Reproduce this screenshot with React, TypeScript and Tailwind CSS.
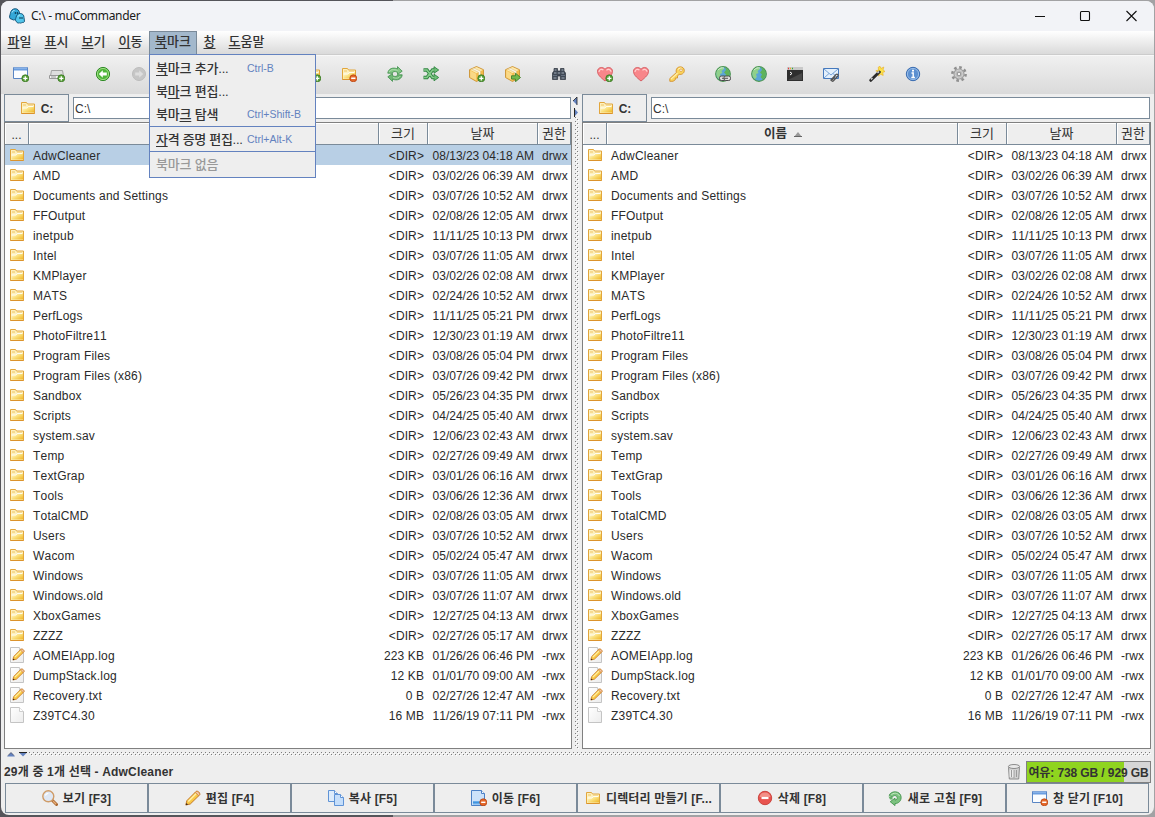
import React from 'react';

interface FileEntry {
  name: string;
  size: string;
  date: string;
  perms: string;
  kind: 'folder' | 'text' | 'file';
}

const dir = (name: string, date: string): FileEntry => ({ name, size: '<DIR>', date, perms: 'drwx', kind: 'folder' });

const files: FileEntry[] = [
  dir('AdwCleaner', '08/13/23 04:18 AM'),
  dir('AMD', '03/02/26 06:39 AM'),
  dir('Documents and Settings', '03/07/26 10:52 AM'),
  dir('FFOutput', '02/08/26 12:05 AM'),
  dir('inetpub', '11/11/25 10:13 PM'),
  dir('Intel', '03/07/26 11:05 AM'),
  dir('KMPlayer', '03/02/26 02:08 AM'),
  dir('MATS', '02/24/26 10:52 AM'),
  dir('PerfLogs', '11/11/25 05:21 PM'),
  dir('PhotoFiltre11', '12/30/23 01:19 AM'),
  dir('Program Files', '03/08/26 05:04 PM'),
  dir('Program Files (x86)', '03/07/26 09:42 PM'),
  dir('Sandbox', '05/26/23 04:35 PM'),
  dir('Scripts', '04/24/25 05:40 AM'),
  dir('system.sav', '12/06/23 02:43 AM'),
  dir('Temp', '02/27/26 09:49 AM'),
  dir('TextGrap', '03/01/26 06:16 AM'),
  dir('Tools', '03/06/26 12:36 AM'),
  dir('TotalCMD', '02/08/26 03:05 AM'),
  dir('Users', '03/07/26 10:52 AM'),
  dir('Wacom', '05/02/24 05:47 AM'),
  dir('Windows', '03/07/26 11:05 AM'),
  dir('Windows.old', '03/07/26 11:07 AM'),
  dir('XboxGames', '12/27/25 04:13 AM'),
  dir('ZZZZ', '02/27/26 05:17 AM'),
  { name: 'AOMEIApp.log', size: '223 KB', date: '01/26/26 06:46 PM', perms: '-rwx', kind: 'text' },
  { name: 'DumpStack.log', size: '12 KB', date: '01/01/70 09:00 AM', perms: '-rwx', kind: 'text' },
  { name: 'Recovery.txt', size: '0 B', date: '02/27/26 12:47 AM', perms: '-rwx', kind: 'text' },
  { name: 'Z39TC4.30', size: '16 MB', date: '11/26/19 07:11 PM', perms: '-rwx', kind: 'file' },
];

/* ---------- icons ---------- */

function Svg({ children, size = 16 }: { children: React.ReactNode; size?: number }) {
  return (
    <svg width={size} height={size} viewBox="0 0 16 16" fill="none" className="block shrink-0">
      {children}
    </svg>
  );
}

// Gradients shared by all icons
function IconDefs() {
  return (
    <svg width="0" height="0" className="absolute">
      <defs>
        <linearGradient id="folder-fill" x1="0" y1="0" x2="1" y2="1">
          <stop offset="0.1" stopColor="#fff8d6" />
          <stop offset="0.5" stopColor="#fae07c" />
          <stop offset="1" stopColor="#efb524" />
        </linearGradient>
        <linearGradient id="page-fill" x1="0" y1="0" x2="1" y2="1">
          <stop offset="0" stopColor="#fff" />
          <stop offset="1" stopColor="#ececec" />
        </linearGradient>
      </defs>
    </svg>
  );
}

function PlusBadge() {
  return (
    <g>
      <circle cx="12.3" cy="12.3" r="3.5" fill="#5aa33c" stroke="#38751f" strokeWidth="0.8" />
      <path d="M12.3 10.2v4.200M10.200 12.3h4.200" stroke="#fff" strokeWidth="1.3" />
    </g>
  );
}

function MinusBadge() {
  return (
    <g>
      <circle cx="12.3" cy="12.3" r="3.5" fill="#e5682a" stroke="#b8430f" strokeWidth="0.8" />
      <path d="M10.2 12.3h4.200" stroke="#fff" strokeWidth="1.4" />
    </g>
  );
}

function FolderShape() {
  return (
    <g>
      <path d="M1.500 13.500v-11h5l1 1.500h7v9.500z" fill="#fdf0bd" stroke="#e2a63c" />
      <path d="M3 5h3M8 6h5" stroke="#f0c566" />
      <path d="M2.500 12.500v-5h4.500l1-1.500h6v6.500z" fill="url(#folder-fill)" />
      <path d="M2.500 8h4.500l1.200-1.500h5.300" stroke="#fffdf0" />
      <path d="M1.500 13.500h13" stroke="#dc932c" />
    </g>
  );
}

const FolderIcon = () => <Svg><FolderShape /></Svg>;
const FolderAddIcon = () => <Svg><FolderShape /><PlusBadge /></Svg>;
const FolderRemoveIcon = () => <Svg><FolderShape /><MinusBadge /></Svg>;

function PencilShape() {
  return (
    <g>
      <path d="M.8 15l1-4.300L10.800 1.700c1.400-1.600 5 1.400 3.700 3.300L5.300 14z" fill="#f9c846" stroke="#c57a2a" strokeWidth="1" />
      <path d="M3.300 11.500l8-8" stroke="#fff0a8" strokeWidth="1.500" />
      <path d="M10.300 2.500l3.400 3.300 1-1.200c.5-1.800-2-3.900-3.400-3.100z" fill="#f3c3a2" stroke="#c57a2a" strokeWidth="0.7" />
      <path d="M.8 15.200l.6-2.200 1.700 1.600z" fill="#3a2a1a" />
    </g>
  );
}

const PencilIcon = () => <Svg><PencilShape /></Svg>;

function PageShape() {
  return (
    <g>
      <path d="M1.500.5h9l4 4v11h-13z" fill="url(#page-fill)" stroke="#c4c4c4" />
      <path d="M10.500.5v4h4" fill="#fff" stroke="#cfcfcf" />
    </g>
  );
}

const FileIcon = () => <Svg><PageShape /></Svg>;

const TextFileIcon = () => (
  <Svg>
    <PageShape />
    <g transform="translate(3.200 1) scale(0.800)"><PencilShape /></g>
  </Svg>
);

function WindowShape() {
  return (
    <g>
      <path d="M.5 1.500h14v11H.5z" fill="#fbfdff" stroke="#5a86c4" />
      <path d="M1 2h13v2.500H1z" fill="#6b9ee0" />
      <path d="M1 2h13" stroke="#a6c6f0" />
    </g>
  );
}

const WindowAddIcon = () => <Svg><WindowShape /><PlusBadge /></Svg>;
const WindowCloseIcon = () => <Svg><WindowShape /><MinusBadge /></Svg>;

const DriveAddIcon = () => (
  <Svg>
    <path d="M2.500 4.500h11l1 5.500h-13z" fill="#dedede" stroke="#a2a2a2" />
    <path d="M.5 9.500h14v3H.5z" fill="#f4f4f4" stroke="#989898" />
    <path d="M2 11h5" stroke="#999" />
    <PlusBadge />
  </Svg>
);

const BackIcon = () => (
  <Svg>
    <circle cx="8" cy="8" r="6.600" fill="#4fb53a" stroke="#2f8a25" />
    <circle cx="8" cy="8" r="5.600" stroke="#a8e08c" strokeWidth="0.900" />
    <path d="M3.800 8l4-3.700v2.300h4v2.800h-4v2.300z" fill="#fff" />
  </Svg>
);

const ForwardIcon = () => (
  <Svg>
    <circle cx="8" cy="8" r="6.500" fill="#c6c6c6" stroke="#bcbcbc" />
    <path d="M12.200 8l-4-3.700v2.300h-4v2.800h4v2.300z" fill="#dedede" />
  </Svg>
);

const SyncIcon = () => (
  <Svg>
    <path d="M.8 7.200C1.300 2.600 6 1 10.500 2.900V.6l4.700 4.600-4.700 3.300V6.300C7.500 5 6 5.300 5.200 7.200z" fill="#85c887" stroke="#3f8f4b" strokeWidth="0.800" />
    <path d="M15.200 8.800c-.5 4.600-5.200 6.200-9.700 4.300v2.300L.8 10.800l4.700-3.300v2.200c3 1.300 4.500 1 5.300-.9z" fill="#70b875" stroke="#3f8f4b" strokeWidth="0.800" />
    <path d="M2.200 6C3.500 3.500 7 2.800 10.500 4.500M6 11.500c3 1.300 6 .8 7.300-1.500" stroke="#b9e2b6" strokeWidth="0.800" />
  </Svg>
);

const SwapIcon = () => (
  <Svg>
    <path d="M.5 4h3.500l5.500 7.500h2M.5 11.500h3.500L9.500 4h2" stroke="#2f8540" strokeWidth="3.400" />
    <path d="M11 .7L15.700 4 11 7.300zM11 8.200l4.700 3.300L11 14.800z" fill="#6fbf78" stroke="#2f8540" strokeWidth="0.900" />
    <path d="M1 4h3l5.500 7.500h2M1 11.500h3L9.500 4h2" stroke="#86cd8c" strokeWidth="1.500" />
  </Svg>
);

function BoxShape() {
  return (
    <g>
      <path d="M7.500.5l7 3.200v7.800l-7 4-7-4V3.700z" fill="#f3bb4a" stroke="#cc9333" strokeWidth="0.900" />
      <path d="M7.500 1l6.300 2.900-6.300 3.300-6.300-3.300z" fill="#fde9ae" />
      <path d="M1.200 4.500l6 3.300v6.800l-6-3.400z" fill="#fad986" />
      <path d="M3 3l6.500 3.300v3.500l2-1V5.200L5 2.100z" fill="#fbf8ec" stroke="#d9b76e" strokeWidth="0.500" />
    </g>
  );
}

const PackIcon = () => <Svg><BoxShape /><PlusBadge /></Svg>;
const UnpackIcon = () => (
  <Svg>
    <BoxShape />
    <path d="M6.500 9.800h4V7.200l5 4.300-5 4.200v-2.600h-4z" fill="#72b84c" stroke="#3f7f2a" strokeWidth="0.900" />
  </Svg>
);

const BinocularsIcon = () => (
  <Svg>
    <path d="M3 2.500h3.500V5h3V2.500H13V5l1.500 2v6.500H9.300V10H6.700v3.500H1.500V7L3 5z" fill="#414a56" stroke="#2b323c" strokeWidth="0.700" />
    <path d="M3.500 4h2M10.500 4h2M3 7h2.500M10.500 7H13M6.800 7h2.400M2.500 12h3M10.500 12h3" stroke="#a3acb8" />
    <path d="M2 9.500h4M10 9.500h4" stroke="#667180" />
  </Svg>
);

function HeartShape() {
  return (
    <g>
      <path d="M8 15C3 11 .5 8.500.5 5.300c0-3.800 5-5.300 7.500-2 2.500-3.300 7.500-1.800 7.500 2C15.500 8.500 13 11 8 15z" fill="#f8868a" stroke="#d4575c" strokeWidth="0.900" />
      <path d="M2 6c0-2.500 2.700-3.500 4.400-1.800M9.500 4.300c1.600-1.600 4.500-.7 4.500 1.400" stroke="#ffd0d0" strokeWidth="1.200" />
    </g>
  );
}

const HeartIcon = () => <Svg><HeartShape /></Svg>;
const HeartAddIcon = () => <Svg><HeartShape /><PlusBadge /></Svg>;

const KeyIcon = () => (
  <Svg>
    <path d="M7.500 3.200C9-.3 15 .2 15.300 4.300c.2 3-2.800 4.800-5.200 3.900L8.500 10v2H6.300v1.800L4 15.300H.8v-2.800L7.400 6.500c-.4-1-.4-2 .1-3.300z" fill="#fbd45b" stroke="#d49230" strokeWidth="0.900" />
    <path d="M2 13.200l6.500-6M9 3.500C10 2 12 1.800 13 2.500" stroke="#fff0b5" strokeWidth="1.100" />
    <circle cx="12" cy="4.200" r="1.300" fill="#fff" stroke="#d49230" strokeWidth="0.700" />
  </Svg>
);

function GlobeShape() {
  return (
    <g>
      <circle cx="8" cy="8" r="7.300" fill="#5aa5d8" stroke="#4c9650" strokeWidth="1.200" />
      <path d="M1.300 7c.5-3.200 3.300-5.700 6-5.700L9 3 6.500 5l1 2-2.500 1 .8 3L4 13C2 11.500 1 9 1.300 7z" fill="#8fd08a" />
      <path d="M10 1.500c3 .8 4.800 3.500 4.800 6.500-.2 2.500-1.500 4.500-3 5.500L9.500 11 11 8.500 9 6.500 11 4z" fill="#5fb35a" />
      <path d="M3 4.200C4.500 2 7 1.500 9 2" stroke="#d8f0cc" />
    </g>
  );
}

const GlobeIcon = () => <Svg><GlobeShape /></Svg>;
const ConnectIcon = () => (
  <Svg>
    <GlobeShape />
    <rect x="4.500" y="10" width="6.500" height="4.500" rx="1.800" fill="#ddd" stroke="#4b4b4b" />
    <rect x="9" y="10" width="6.500" height="4.500" rx="1.800" fill="#ddd" stroke="#4b4b4b" />
    <path d="M7 12.300h6" stroke="#555" />
  </Svg>
);

const TerminalIcon = () => (
  <Svg>
    <path d="M0 1h16v14H0z" fill="#2e2e2e" />
    <path d="M0 1h16v3H0z" fill="#c9c9c9" />
    <path d="M1 2.500h1" stroke="#e33" strokeWidth="1.500" />
    <path d="M3 2.500h1" stroke="#e8b020" strokeWidth="1.500" />
    <path d="M5 2.500h1" stroke="#3a3" strokeWidth="1.500" />
    <path d="M1 14h14V7z" fill="#484848" />
    <path d="M3 6l2 1.500L3 9" stroke="#fff" />
  </Svg>
);

const MailIcon = () => (
  <Svg>
    <path d="M.5 2.500h15v10H.5z" fill="#e4f0fc" stroke="#4679bd" />
    <path d="M1 3l7 6 7-6M1 12l5-4.500M15 12l-5-4.500" stroke="#78a4d8" />
    <path d="M7.500 14.500l5.500-6c1.200-1 2.800.3 1.800 1.500l-4.500 5c-1 .8-2-.2-1.300-1l3.500-4" stroke="#555" strokeWidth="1.200" />
  </Svg>
);

const WandIcon = () => (
  <Svg>
    <path d="M11 .3l1 2.200L14.800 1l-.8 2.900 2 1.600-2.300.9.500 3-2.700-1.200L9.500 10V6.500L6.800 4.800l2.800-.8-.4-2.700z" fill="#fde24a" stroke="#eab42f" strokeWidth="0.700" />
    <path d="M1.800 14.300L10.300 6" stroke="#2b2b2b" strokeWidth="3" strokeLinecap="round" />
    <path d="M2 13.500l1.500-1.500M8.500 7L10 5.500" stroke="#d8d8d8" strokeWidth="1.300" />
  </Svg>
);

const InfoIcon = () => (
  <Svg>
    <circle cx="8" cy="8" r="6.700" fill="#5b8fd0" stroke="#3a6cb0" />
    <circle cx="8" cy="8" r="5.600" stroke="#a5c6ec" strokeWidth="0.800" />
    <path d="M8 3.800v1.700" stroke="#fff" strokeWidth="2" />
    <path d="M6.500 7h1.700v4M6.300 11.500h3.600" stroke="#fff" strokeWidth="1.400" />
  </Svg>
);

const GearIcon = () => (
  <Svg>
    <circle cx="8" cy="8" r="6.600" stroke="#909090" strokeWidth="2.600" strokeDasharray="2.600 2.580" />
    <circle cx="8" cy="8" r="5" fill="#d6d6d6" stroke="#a0a0a0" strokeWidth="1.200" />
    <circle cx="8" cy="8" r="3.200" stroke="#b2b2b2" strokeWidth="0.800" />
    <circle cx="8" cy="8" r="1.900" fill="#f2f2f2" stroke="#858585" />
  </Svg>
);

const MagnifierIcon = () => (
  <Svg>
    <path d="M10.500 10.500l4 4" stroke="#a8652f" strokeWidth="3" strokeLinecap="round" />
    <path d="M11 11l3.200 3.200" stroke="#e8b07a" strokeWidth="1.300" />
    <circle cx="6.300" cy="6.300" r="5.500" fill="#dfe8f5" stroke="#cf9c68" strokeWidth="1.400" />
    <path d="M3.300 5.500c.5-1.500 1.800-2.200 3-2.200" stroke="#fff" strokeWidth="1.300" />
  </Svg>
);

const CopyIcon = () => (
  <Svg>
    <path d="M.5.5h6l3 3v8h-9z" fill="#dcebfb" stroke="#5f93d6" />
    <path d="M6.500 4.500h6l3 3v8h-9z" fill="#c5defa" stroke="#5f93d6" />
    <path d="M12.500 4.500v3h3M6.500.5v3h3" fill="#fff" stroke="#5f93d6" />
  </Svg>
);

const MoveIcon = () => (
  <Svg>
    <path d="M.5.5h10l3 3v12H.5z" fill="#cce2fa" stroke="#4b80c6" />
    <path d="M10.500.5v3h3" fill="#fff" stroke="#4b80c6" />
    <path d="M2 12.500h9" stroke="#3f95e0" strokeWidth="2.400" />
    <path d="M2 14.500h10" stroke="#9cc8f2" />
    <MinusBadge />
  </Svg>
);

const DeleteIcon = () => (
  <Svg>
    <circle cx="8" cy="8" r="6.700" fill="#e8534e" stroke="#cb4640" />
    <path d="M2.500 7a5.600 5.600 0 0 1 11 0z" fill="#f29088" />
    <path d="M4.500 8h7" stroke="#fff" strokeWidth="2.200" />
  </Svg>
);

const RefreshIcon = () => (
  <Svg>
    <path d="M2.200 5.300C4 .4 13 .6 14 6.300c.8 4.200-2.300 7.200-6 7.300v2L3.200 11.700 8 8.200v1.900c1.500-.1 2.500-1.200 2.200-2.600C9.500 5.200 6.800 4.800 5.300 7z" fill="#7cc27f" stroke="#45944f" strokeWidth="0.900" />
    <path d="M4 5.200C6 2.400 11 2.600 12.500 6" stroke="#c2e6c0" />
    <path d="M1.500 6.500h4v3h-2.500z" fill="#66b06a" />
  </Svg>
);

const TrashIcon = () => (
  <Svg>
    <path d="M2.500 3.500h11l-.8 11.500H3.300z" fill="#d2d2d2" stroke="#858585" strokeWidth="0.900" />
    <ellipse cx="8" cy="2.500" rx="5.600" ry="2" fill="#e8e8e8" stroke="#808080" strokeWidth="0.900" />
    <path d="M5.500 6v7M8 6v8M10.500 6v7" stroke="#9b9b9b" />
    <path d="M4.200 6v7M6.800 6v7" stroke="#f5f5f5" />
  </Svg>
);

const AppIcon = () => (
  <Svg>
    <path d="M1 10.500c-1-2 0-3 .3-5C1.800 2.500 3.800.6 6.300.7c2.600.1 4 2 4.200 4.300l-1 6c-2 1.800-4 .3-5 1z" fill="#35a8d8" stroke="#0b4c72" strokeWidth="0.900" />
    <path d="M7 13c-1-1-.5-2 0-3.500.5-2.500 2-4 4.200-4 2.500 0 3.800 1.700 3.800 4l.5 4c-.8 1.500-2 .5-3 1.300-1.200.8-1.800-.3-2.800.2-1 .3-2-.5-2.700-2z" fill="#52c6ec" stroke="#0b4c72" strokeWidth="0.900" />
    <path d="M3 4.500c.5-1.500 1.500-2 2.500-2M9 8.500c.5-1 1.200-1.500 2-1.500" stroke="#c2f0ff" />
    <path d="M6.300 4v2M8.300 4v2M11 9v2M13 9v2" stroke="#08354f" />
  </Svg>
);

/* ---------- window chrome ---------- */

function TitleBar() {
  return (
    <div className="flex h-[30px] items-center bg-[#f2f3f7] pl-2">
      <AppIcon />
      <span className="ml-[6px] font-['Noto_Sans','Noto_Sans_CJK_KR',sans-serif] text-[12px] tracking-[-0.3px] text-[#1a1a1a]">C:\ - muCommander</span>
      <svg className="mr-[17px] mb-px ml-auto block" width="102" height="12" viewBox="0 0 102 12" fill="none" stroke="#111" strokeWidth="1.100">
        <path d="M0 6.500h10" />
        <rect x="45.500" y="1.500" width="9" height="9" rx="1" />
        <path d="M91.500 1l10 10M101.500 1l-10 10" />
      </svg>
    </div>
  );
}

const menus = [
  { label: '파일', width: 'w-[37px]' },
  { label: '표시', width: 'w-[37px]' },
  { label: '보기', width: 'w-[37px]' },
  { label: '이동', width: 'w-[37px]' },
  { label: '북마크', width: 'w-[48px]' },
  { label: '창', width: 'w-[25px]' },
  { label: '도움말', width: 'w-[49px]' },
];

// Underlines the mnemonic character of a menu label
function Mnemonic({ text, index = 0 }: { text: string; index?: number }) {
  return (
    <span>
      {text.slice(0, index)}
      <span className="underline decoration-1 underline-offset-2">{text[index]}</span>
      {text.slice(index + 1)}
    </span>
  );
}

const bookmarkItems = [
  { text: '북마크 추가...', index: 0, shortcut: 'Ctrl-B' },
  { text: '북마크 편집...', index: 1, shortcut: '' },
  { text: '북마크 탐색', index: 2, shortcut: 'Ctrl+Shift-B' },
];

const shortcutText = 'text-[10.5px] font-normal tracking-normal text-[#6382bf]';

function BookmarkMenu() {
  return (
    <div className="absolute top-[23px] left-0 z-10 w-[167px] border border-[#6382bf] bg-[#eee] tracking-[-0.2px] text-[#333]">
      <div className="h-[72px] border-b border-[#6382bf] pt-[2px]">
        {bookmarkItems.map((item) => (
          <div key={item.text} className="flex h-[23px] items-center pl-[6px]">
            <span className="w-[91px]"><Mnemonic text={item.text} index={item.index} /></span>
            <span className={shortcutText}>{item.shortcut}</span>
          </div>
        ))}
      </div>
      <div className="flex h-[25px] items-center border-b border-[#6382bf] pt-[2px] pl-[6px]">
        <span className="w-[91px] tracking-[-0.3px]"><Mnemonic text="자격 증명 편집..." /></span>
        <span className={shortcutText}>Ctrl+Alt-K</span>
      </div>
      <div className="flex h-[25px] items-center pl-[6px] text-[#999]">북마크 없음</div>
    </div>
  );
}

function MenuBar() {
  return (
    <div className="flex h-[24px] border-b border-[#ccc] bg-linear-to-b from-white to-[#dadada] text-[13px] font-medium whitespace-nowrap text-[#333]">
      {menus.map((menu) =>
        menu.label === '북마크' ? (
          <div key={menu.label} className={`relative flex items-center justify-center border border-b-0 border-[#7a8a99] bg-[#a3b8cc] pb-[2px] ${menu.width}`}>
            <Mnemonic text={menu.label} />
            <div className="absolute -top-px -left-px"><BookmarkMenu /></div>
          </div>
        ) : (
          <div key={menu.label} className={`flex items-center justify-center pb-px ${menu.width}`}>
            <Mnemonic text={menu.label} />
          </div>
        )
      )}
    </div>
  );
}

const leadingGroups = [
  [WindowAddIcon, DriveAddIcon],
  [BackIcon, ForwardIcon],
];

const trailingGroups = [
  [FolderAddIcon, FolderRemoveIcon],
  [SyncIcon, SwapIcon],
  [PackIcon, UnpackIcon],
  [BinocularsIcon],
  [HeartAddIcon, HeartIcon, KeyIcon],
  [ConnectIcon, GlobeIcon, TerminalIcon, MailIcon],
  [WandIcon, InfoIcon],
  [GearIcon],
];

function ToolGroup({ icons }: { icons: React.ComponentType[] }) {
  return (
    <div className="flex">
      {icons.map((Icon, i) => (
        <div key={i} className="flex w-9 justify-center"><Icon /></div>
      ))}
    </div>
  );
}

function Toolbar() {
  return (
    <div className="flex h-[39px] items-center border-t border-[#f8f8f8] bg-linear-to-b from-[#f0f0f0] to-[#dadada] pb-[2px] pl-[2px]">
      <div className="flex w-[292px] gap-[10px]">
        {leadingGroups.map((icons, i) => <ToolGroup key={i} icons={icons} />)}
      </div>
      <div className="flex gap-[10px]">
        {trailingGroups.map((icons, i) => <ToolGroup key={i} icons={icons} />)}
      </div>
    </div>
  );
}

/* ---------- file panels ---------- */

const headCell = 'flex items-center justify-center border-r border-b border-[#7a8a99] bg-[#eee] shadow-[inset_1px_1px_0_#fff]';

function FileTable({ active, nameWidth }: { active: boolean; nameWidth: string }) {
  return (
    <div className="flex min-h-0 flex-1 flex-col border border-[#808080] bg-white text-[12px] text-[#2a2a2a] [font-kerning:none]">
      <div className="flex h-[22px] text-[13px] text-[#333]">
        <div className={`${headCell} w-[24px] pt-[2px] text-[12px]`}>...</div>
        <div className={`${headCell} gap-[7px] pt-[2px] pl-[2px] text-[12.5px] font-bold ${nameWidth}`}>
          {!active && (
            <>
              <span>이름</span>
              <svg width="8" height="5" viewBox="0 0 8 5"><path d="M0 5l4-5 4 5z" fill="#999" /><path d="M0 4.500h8" stroke="#666" /></svg>
            </>
          )}
        </div>
        <div className={`${headCell} w-[49px]`}>크기</div>
        <div className={`${headCell} w-[110px]`}>날짜</div>
        <div className={`${headCell} flex-1`}>권한</div>
      </div>
      {files.map((file, i) => (
        <div key={file.name} className={`flex h-5 items-center whitespace-nowrap ${active && i === 0 ? 'bg-[#b8cfe5]' : ''}`}>
          <div className="flex w-[24px] justify-center">
            {file.kind === 'folder' ? <FolderIcon /> : file.kind === 'text' ? <TextFileIcon /> : <FileIcon />}
          </div>
          <div className={`pt-[2px] pl-1 tracking-[0.2px] ${nameWidth}`}>{file.name}</div>
          <div className="w-[49px] pt-[2px] pr-[4px] text-right tracking-[0.1px]">{file.size}</div>
          <div className="w-[110px] pt-[2px] pr-[4px] text-right">{file.date}</div>
          <div className="flex-1 pt-[2px] pl-1 tracking-[0.1px]">{file.perms}</div>
        </div>
      ))}
    </div>
  );
}

function FilePanel({ active, nameWidth, width }: { active: boolean; nameWidth: string; width: string }) {
  return (
    <div className={`flex min-w-0 flex-col ${width}`}>
      <div className="flex h-[28px] items-center gap-1 text-[12px] text-[#333]">
        <div className="flex h-[28px] w-[65px] items-center justify-center gap-[5px] border border-[#7a8a99] bg-[#eee] font-bold">
          <FolderIcon />
          <span className="pt-px tracking-[-0.2px]">C:</span>
        </div>
        <div className="mr-px flex h-[22px] flex-1 items-center border border-[#7a8a99] bg-white pt-px pl-px">C:\</div>
      </div>
      <FileTable active={active} nameWidth={nameWidth} />
    </div>
  );
}

function Dots({ id }: { id: string }) {
  return (
    <svg className="block h-full w-full">
      <defs>
        <pattern id={id} width="4" height="4" patternUnits="userSpaceOnUse">
          <path d="M1 1h1v1H1zM3 3h1v1H3z" fill="#fff" />
          <path d="M0 0h1v1H0zM2 2h1v1H2z" fill="#7c7c7c" />
        </pattern>
      </defs>
      <rect width="100%" height="100%" fill={`url(#${id})`} />
    </svg>
  );
}

function VerticalDivider() {
  return (
    <div className="flex w-[10px] flex-col pt-[3px] pl-px">
      <svg width="5" height="20" viewBox="0 0 5 20" className="block">
        <path d="M4 0v8L0 4z" fill="#6382bf" />
        <path d="M0 4l4-4v8" stroke="#222" strokeWidth="0.800" fill="none" />
        <path d="M1 11v9l4-4.500z" fill="#6382bf" />
        <path d="M1.500 11v9" stroke="#222" />
      </svg>
      <div className="ml-[2px] w-[4px] flex-1"><Dots id="dots-v" /></div>
    </div>
  );
}

function HorizontalDivider() {
  return (
    <div className="flex h-[9px] items-center pt-px pl-[3px]">
      <svg width="22" height="5" viewBox="0 0 22 5" className="block">
        <path d="M0 4.500h8L4 .5z" fill="#6382bf" />
        <path d="M1 3.500l3-3 3 3" stroke="#334" strokeWidth="0.600" fill="none" />
        <path d="M12 .5h8l-4 4z" fill="#6382bf" />
        <path d="M12 .5h8" stroke="#222" />
      </svg>
      <div className="h-[4px] flex-1"><Dots id="dots-h" /></div>
    </div>
  );
}

/* ---------- bottom ---------- */

function StatusBar() {
  return (
    <div className="flex h-[25px] items-center text-[12px] font-bold whitespace-nowrap text-[#333]">
      <span className="mt-[3px] tracking-[0.17px]">29개 중 1개 선택 - AdwCleaner</span>
      <div className="mt-[2px] mr-1 ml-auto"><TrashIcon /></div>
      <div className="mt-[3px] flex h-[22px] w-[125px] items-center justify-center border border-[#808080] bg-linear-to-r from-[#8fd41f] from-79% to-[#d6d6d6] to-79% pt-px tracking-[-0.1px]">
        여유: 738 GB / 929 GB
      </div>
    </div>
  );
}

const commands = [
  { label: '보기 [F3]', icon: MagnifierIcon },
  { label: '편집 [F4]', icon: PencilIcon },
  { label: '복사 [F5]', icon: CopyIcon },
  { label: '이동 [F6]', icon: MoveIcon },
  { label: '디렉터리 만들기 [F...', icon: FolderIcon },
  { label: '삭제 [F8]', icon: DeleteIcon },
  { label: '새로 고침 [F9]', icon: RefreshIcon },
  { label: '창 닫기 [F10]', icon: WindowCloseIcon },
];

function CommandBar() {
  return (
    <div className="flex h-[30px] pl-px text-[12px] font-bold whitespace-nowrap text-[#333]">
      {commands.map(({ label, icon: Icon }) => (
        <div key={label} className="flex w-[143px] items-center justify-center gap-[5px] border border-[#7a8a99] bg-[#eee] tracking-[0.15px]">
          <Icon />
          <span className="pt-[2px]">{label}</span>
        </div>
      ))}
    </div>
  );
}

export default function App() {
  return (
    <div className="h-[817px] w-[1155px] overflow-hidden bg-linear-to-r from-[#55555a] from-34% to-[#a2a2a4] to-34% pt-px pr-px pb-[2px] pl-px font-['Liberation_Sans','Noto_Sans_CJK_KR',sans-serif]">
      <IconDefs />
      <div className="flex h-full flex-col overflow-hidden rounded-lg bg-[#eee]">
        <TitleBar />
        <MenuBar />
        <Toolbar />
        <div className="flex min-h-0 flex-1 flex-col pr-[3px] pl-[3px]">
          <div className="flex h-[655px]">
            <FilePanel active nameWidth="w-[350px]" width="w-[568px]" />
            <VerticalDivider />
            <FilePanel active={false} nameWidth="w-[351px]" width="flex-1" />
          </div>
          <HorizontalDivider />
          <StatusBar />
          <CommandBar />
        </div>
      </div>
    </div>
  );
}
